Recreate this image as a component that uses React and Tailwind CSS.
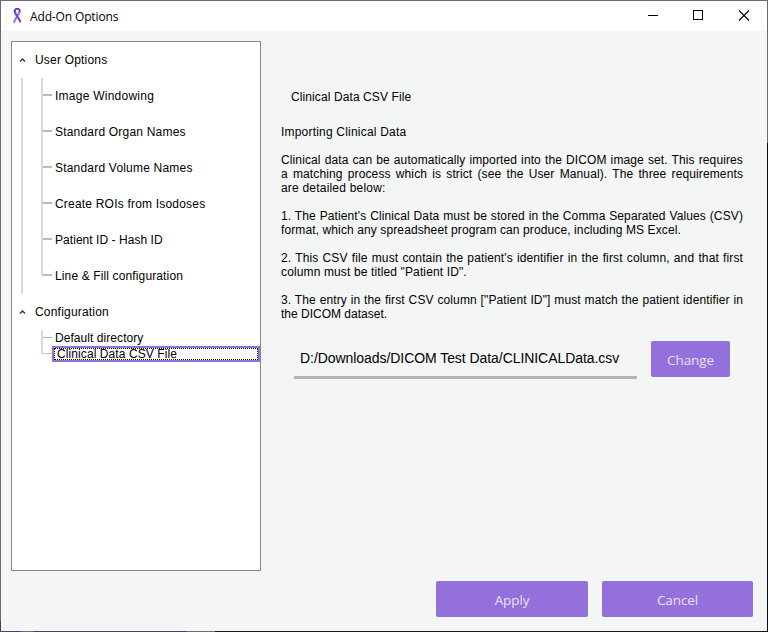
const userOptions = [
  ["Image Windowing", "tracking-[0.25px]"],
  ["Standard Organ Names", "tracking-[0.2px]"],
  ["Standard Volume Names", "tracking-[0.2px]"],
  ["Create ROIs from Isodoses", "tracking-[0.2px]"],
  ["Patient ID - Hash ID", "tracking-[0.05px]"],
  ["Line & Fill configuration", "tracking-[0.13px]"],
];

function Chevron() {
  return (
    <svg className="mr-[9px] ml-[7px] h-[6px] w-[7px]" viewBox="0 0 7 6" fill="none">
      <path d="M1 4.5 3.5 2 6 4.5" stroke="#3a3a3a" strokeWidth="1.5" />
    </svg>
  );
}

function Ribbon() {
  return (
    <svg className="h-4 w-[10px]" viewBox="0 0 10 16" fill="none">
      <path d="M7.6 2.8C8 6.2 3.6 9 1.9 14.6" stroke="#a277e6" strokeWidth="2.2" />
      <path d="M2.8 2.8C2.4 6.2 6.8 9 8.4 14.2" stroke="#8044d4" strokeWidth="2.2" />
      <path d="M2.7 3.6C2.4 -0.2 8 -0.2 7.7 3.6" stroke="#5b2f9c" strokeWidth="1.7" />
    </svg>
  );
}

function Tree() {
  return (
    <div className="h-[530px] w-[250px] border border-[#828790] bg-white">
      <div className="flex h-9 items-center tracking-[0.2px]">
        <Chevron />
        User Options
      </div>
      <div className="ml-[9px] h-[216px] border-l-2 border-[#dcd8d5] pl-[18px]">
        {userOptions.map(([label, spacing], i) => (
          <div key={label} className="flex h-9">
            <div className="w-[2px]">
              <div className={i === 5 ? "h-[18px] bg-[#dcd8d5]" : "h-9 bg-[#dcd8d5]"} />
            </div>
            <div className="mt-[16px] h-[2px] w-[9px] bg-[#bfbab6]" />
            <div className={"ml-[3px] leading-9 " + spacing}>{label}</div>
          </div>
        ))}
      </div>
      <div className="flex h-9 items-center tracking-[0.2px]">
        <Chevron />
        Configuration
      </div>
      <div className="ml-[29px] flex h-4">
        <div className="h-4 w-[2px] bg-[#dcd8d5]" />
        <div className="mt-[7px] h-px w-[9px] bg-[#b5afaa]" />
        <div className="ml-[3px] leading-4 tracking-[0.06px]">Default directory</div>
      </div>
      <div className="ml-[29px] flex h-4">
        <div className="h-[8px] w-[2px] bg-[#dcd8d5]" />
        <div className="mt-[7px] h-px w-[9px] bg-[#c8c3bf]" />
        <div className="h-4 w-[208px] border-2 border-[#9370db]">
          <div className="h-3 border border-dotted border-black pl-[2px] leading-[11px] tracking-[0.09px]">Clinical Data CSV File</div>
        </div>
      </div>
    </div>
  );
}

const paragraphs = [
  { end: "tracking-[0.2px]", lines: ["Clinical data can be automatically imported into the DICOM image set. This requires", "a matching process which is strict (see the User Manual). The three requirements", "are detailed below:"] },
  { end: "tracking-[0.11px]", lines: ["1. The Patient's Clinical Data must be stored in the Comma Separated Values (CSV)", "format, which any spreadsheet program can produce, including MS Excel."] },
  { end: "tracking-[0.13px]", lines: ["2. This CSV file must contain the patient's identifier in the first column, and that first", "column must be titled \"Patient ID\"."] },
  { end: "tracking-[0px]", lines: ["3. The entry in the first CSV column [\"Patient ID\"] must match the patient identifier in", "the DICOM dataset."] },
];

function Button({ className, children }) {
  return (
    <button className={"h-9 rounded-[2px] bg-[#9370db] pt-[2px] font-['Open_Sans','Noto_Sans',sans-serif] text-[13.5px] font-normal tracking-[-0.1px] text-[#e9e2fa] " + className}>
      {children}
    </button>
  );
}

export default function App() {
  return (
    <div className="flex h-[632px] w-[768px] flex-col overflow-hidden bg-[#f4f6f5] font-['Liberation_Sans',Arial,sans-serif] text-[12px] text-black">
      <div className="h-px bg-[#6b6b6b]" />
      <div className="flex h-[630px]">
        <div className="flex w-px flex-col">
          <div className="h-[620px] bg-[#6b6b6b]" />
          <div className="flex-1 bg-[#4a4068]" />
        </div>
        <div className="w-[766px]">
          <header className="flex h-[30px] items-center bg-white pl-[11px]">
            <Ribbon />
            <span className="ml-2 pt-px font-['Open_Sans','Noto_Sans',sans-serif] text-[12px] tracking-[-0.14px]">Add-On Options</span>
            <svg className="ml-auto h-[30px] w-[120px]" viewBox="0 0 120 30" fill="none" stroke="black" shapeRendering="crispEdges">
              <path d="M1 14.5h10M46.5 9.5h9v9h-9z" />
              <path d="M92 9.5l10 10M102 9.5l-10 10" shapeRendering="auto" strokeWidth="1.1" />
            </svg>
          </header>
          <div className="flex pt-[10px] pl-[10px]">
            <Tree />
            <main className="ml-[20px] w-[463px] pt-[49px] leading-[14px]">
              <h1 className="pl-[10px] tracking-[0.1px]">Clinical Data CSV File</h1>
              <p className="mt-[21px] tracking-[0.2px]">Importing Clinical Data</p>
              {paragraphs.map(({ end, lines }) => (
                <div key={lines[0]} className="mt-[14px] w-[462px] whitespace-nowrap">
                  {lines.map((line, i) => (
                    <p key={line} className={i === lines.length - 1 ? end : "[text-align-last:justify] tracking-[0.12px]"}>{line}</p>
                  ))}
                </div>
              ))}
              <div className="mt-[20px] ml-[13px] flex">
                <div className="h-[38px] w-[343px] border-b-[3px] border-[#b3b3b3] pl-[6px] text-[14px] leading-[34px] tracking-[-0.06px]">D:/Downloads/DICOM Test Data/CLINICALData.csv</div>
                <Button className="ml-[14px] w-[79px]">Change</Button>
              </div>
            </main>
          </div>
          <footer className="mt-[10px] mr-[14px] flex justify-end gap-[14px]">
            <Button className="w-[152px]">Apply</Button>
            <Button className="w-[151px]">Cancel</Button>
          </footer>
        </div>
        <div className="flex w-px flex-col">
          <div className="h-[142px] bg-[#6b6b6b]" />
          <div className="flex-1 bg-[#0a0a0c]" />
        </div>
      </div>
      <div className="flex h-px">
        <div className="w-5 bg-[#4a4068]" />
        <div className="w-[14px] bg-[#6b6b6b]" />
        <div className="w-[153px] bg-[#4a4068]" />
        <div className="w-7 bg-[#6b6b6b]" />
        <div className="flex-1 bg-[#17171a]" />
      </div>
    </div>
  );
}
